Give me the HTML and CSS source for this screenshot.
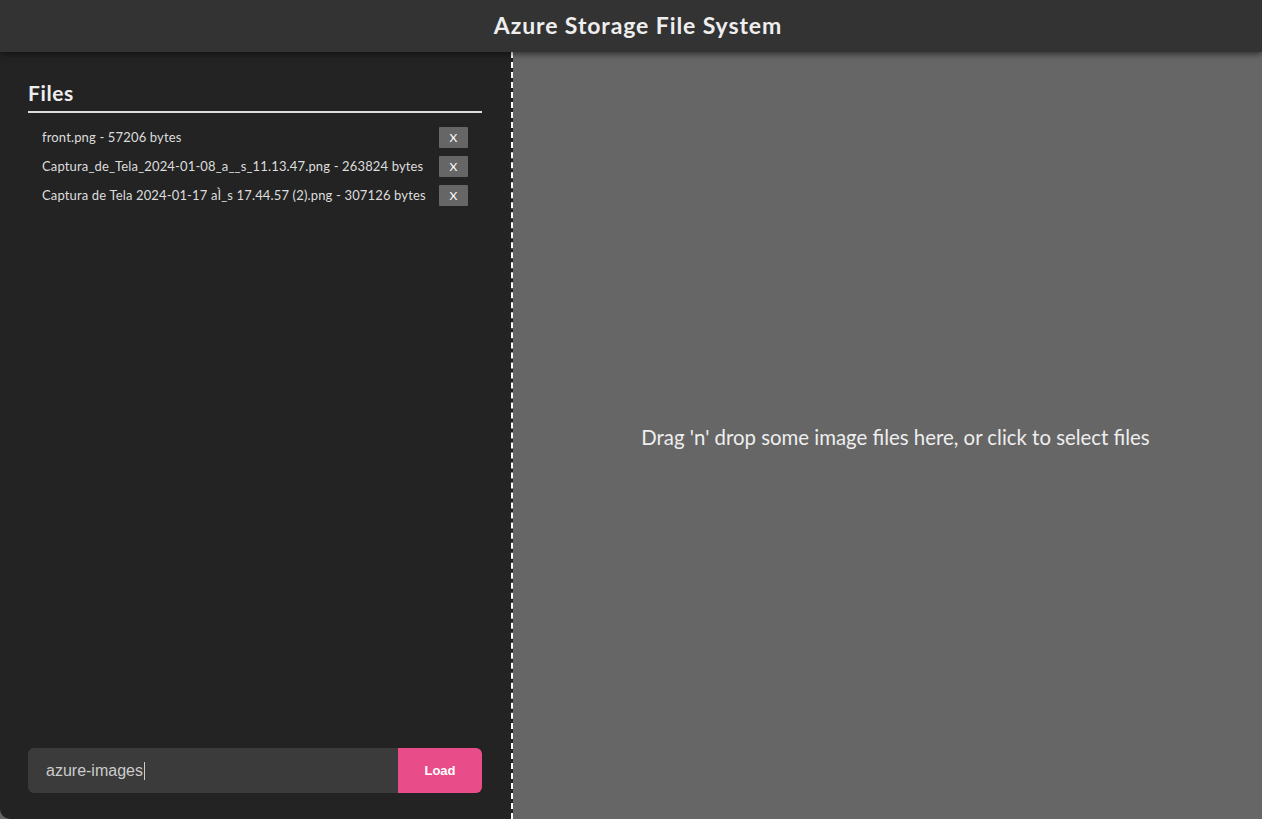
FILE: index.html
```html
<!DOCTYPE html>
<html>
<head>
<meta charset="utf-8">
<link rel="stylesheet" href="styles.css">
</head>
<body>
<header class="topbar"><h1 class="title">Azure Storage File System</h1></header>
<main class="layout">
  <aside class="sidebar">
    <div class="files">
      <h2 class="files-title">Files</h2>
      <ul class="file-list">
        <li class="file-item"><span class="file-name">front.png - 57206 bytes</span><button class="remove">X</button></li>
        <li class="file-item"><span class="file-name">Captura_de_Tela_2024-01-08_a__s_11.13.47.png - 263824 bytes</span><button class="remove">X</button></li>
        <li class="file-item"><span class="file-name">Captura de Tela 2024-01-17 aÌ_s 17.44.57 (2).png - 307126 bytes</span><button class="remove">X</button></li>
      </ul>
    </div>
    <form class="loader">
      <div class="input-field">azure-images<span class="caret"></span></div>
      <button type="button" class="load">Load</button>
    </form>
  </aside>
  <section class="dropzone">
    <p class="drop-text">Drag 'n' drop some image files here, or click to select files</p>
  </section>
</main>
</body>
</html>
```
FILE: styles.css
```css
html, body { margin: 0; padding: 0; height: 100%; }
body {
  background: #666;
  font-family: "Lato", "Open Sans", sans-serif;
  color: #eee;
  display: flex;
  flex-direction: column;
  overflow: hidden;
}
.topbar {
  height: 52px;
  background: #333;
  display: flex;
  align-items: center;
  justify-content: center;
  padding-left: 14px;
  box-shadow: 0 2px 6px rgba(0,0,0,0.55);
  position: relative;
  z-index: 2;
  flex-shrink: 0;
}
.title {
  margin: 0;
  font-size: 23px;
  font-weight: 700;
  color: #eee;
  letter-spacing: 0.9px;
  margin-top: -2px;
}
.layout {
  flex: 1;
  display: flex;
  min-height: 0;
}
.sidebar {
  width: 513px;
  background: #232323;
  border-right: 2px dashed #fff;
  border-bottom-left-radius: 10px;
  display: flex;
  flex-direction: column;
  justify-content: space-between;
  padding: 28px 29px 26px 28px;
  box-sizing: border-box;
}
.files-title {
  margin: 0;
  font-size: 21px;
  font-weight: 700;
  color: #eee;
  letter-spacing: 0.6px;
  padding-bottom: 6px;
  border-bottom: 2px solid #ddd;
  line-height: 25px;
}
.file-list {
  list-style: none;
  margin: 0;
  padding: 13px 14px 0 14px;
  display: flex;
  flex-direction: column;
  gap: 8px;
}
.file-item {
  display: flex;
  align-items: center;
  justify-content: space-between;
  height: 21px;
}
.file-name {
  font-size: 13px;
  color: #ddd;
  letter-spacing: 0.15px;
}
.remove {
  width: 29px;
  height: 21px;
  border: none;
  border-radius: 1px;
  background: #666;
  color: #fff;
  font-family: "Lato", sans-serif;
  font-size: 12px;
  padding: 0;
  margin-top: 1px;
}
.loader {
  margin: 0;
  display: flex;
  height: 45px;
}
.input-field {
  flex: 1;
  background: #3b3b3b;
  border-radius: 6px 0 0 6px;
  color: #ccc;
  font-family: "Liberation Sans", Arial, sans-serif;
  font-size: 16px;
  display: flex;
  align-items: center;
  padding-left: 18px;
}
.caret {
  display: inline-block;
  width: 1px;
  height: 18px;
  background: #ccc;
  margin-left: 1px;
}
.load {
  width: 84px;
  border: none;
  background: #e84d8a;
  color: #fff;
  font-family: "Liberation Sans", Arial, sans-serif;
  font-weight: 700;
  font-size: 13px;
  border-radius: 0 6px 6px 0;
}
.dropzone {
  flex: 1;
  display: flex;
  align-items: center;
  justify-content: center;
  padding-left: 16px;
}
.drop-text {
  margin: 0;
  font-size: 20.4px;
  color: #eee;
  padding-top: 3px;
}
```
